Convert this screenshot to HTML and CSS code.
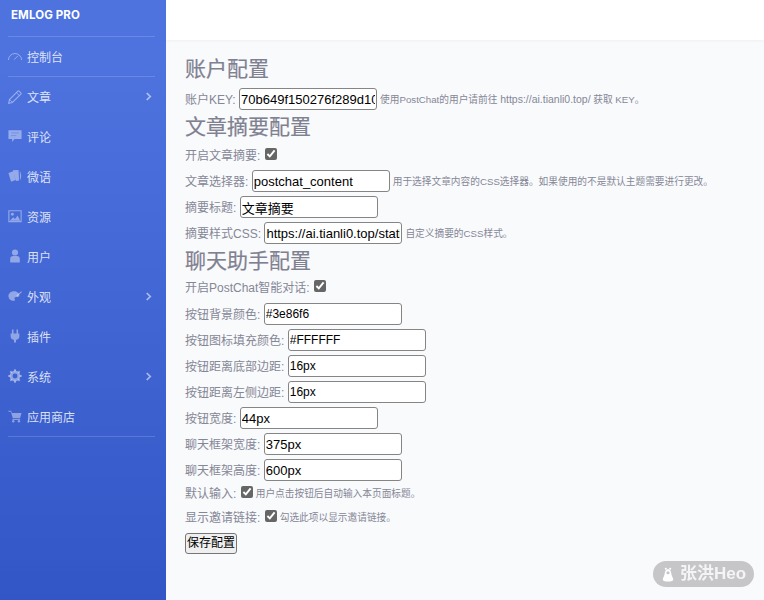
FILE: index.html
```html
<!DOCTYPE html>
<html lang="zh-CN">
<head>
<meta charset="utf-8">
<title>EMLOG PRO</title>
<link rel="stylesheet" href="styles.css">
</head>
<body>
<div class="app">
  <aside class="sidebar">
    <div class="brand">EMLOG PRO</div>
    <hr class="divider">
    <a class="nav-item"><svg class="nav-icon" viewBox="0 0 16 16"><path d="M.5 11.500a7.500 7.500 0 0 1 15 0" fill="none" stroke="currentColor" stroke-width="1.100"/><path d="M7 11l4.500-4.500" stroke="currentColor" stroke-width="1.100"/></svg><span>控制台</span></a>
    <hr class="divider">
    <a class="nav-item"><svg class="nav-icon" viewBox="0 0 16 16"><path d="M.8 15.200l.9-4.200L11.300 1.300a1 1 0 0 1 1.400 0l2 2a1 1 0 0 1 0 1.400L5 14.300z" fill="none" stroke="currentColor" stroke-width="1.300"/><path d="M9.700 3l3.300 3.300M2 11l3 3" stroke="currentColor" stroke-width="1"/></svg><span>文章</span><svg class="chev" viewBox="0 0 8 10"><path d="M2 1l4 4-4 4" fill="none" stroke="currentColor" stroke-width="2"/></svg></a>
    <a class="nav-item"><svg class="nav-icon" viewBox="0 0 16 16"><path d="M.5 1.500h15v10H7.500l-2.800 3.300v-3.300H.5z" fill="currentColor"/><path d="M3.500 4.500h9M3.500 7.500h6" stroke="#6585e2" stroke-width=".8"/></svg><span>评论</span></a>
    <a class="nav-item"><svg class="nav-icon" viewBox="0 0 16 16"><path d="M.5 4.500l5.500-2 2.500 10-5 2z" fill="currentColor"/><path d="M5.500 1.500l6.500-.5.800 12-3.800.8z" fill="currentColor"/><path d="M13.500 2Q16.500 8 13.800 13z" fill="currentColor"/></svg><span>微语</span></a>
    <a class="nav-item"><svg class="nav-icon" viewBox="0 0 16 16"><path d="M1 2h14v12.500H1z" fill="none" stroke="currentColor" stroke-width="1.300"/><circle cx="5" cy="6" r="1.700" fill="currentColor"/><path d="M2 13.500l4-4 2 2 3-4 3 6z" fill="currentColor"/></svg><span>资源</span></a>
    <a class="nav-item"><svg class="nav-icon" viewBox="0 0 16 16"><circle cx="8" cy="4" r="3.500" fill="currentColor"/><path d="M2.500 15.500v-4A3.500 3.500 0 0 1 6 8h4a3.500 3.500 0 0 1 3.500 3.500v4z" fill="currentColor"/></svg><span>用户</span></a>
    <a class="nav-item"><svg class="nav-icon" viewBox="0 0 16 16"><path d="M7 2.500C3 2.500.5 5 .5 8S3 13.500 6.500 13.500c2 0 1.500-1.500 1-2.500s.5-2 2-2h1.500c1.500 0 2-1 2-2 0-2.500-3-4.500-6-4.500z" fill="currentColor"/><path d="M10 8l5.500-5" stroke="currentColor" stroke-width="1.300"/></svg><span>外观</span><svg class="chev" viewBox="0 0 8 10"><path d="M2 1l4 4-4 4" fill="none" stroke="currentColor" stroke-width="2"/></svg></a>
    <a class="nav-item"><svg class="nav-icon" viewBox="0 0 16 16"><path d="M4.500.5h1.800V5H4.500zM9.700.5h1.800V5H9.700zM3 5h10v3.500c0 2-1.500 3.500-3.800 3.800V15.500H6.800v-3.200C4.500 12 3 10.500 3 8.500z" fill="currentColor"/></svg><span>插件</span></a>
    <a class="nav-item"><svg class="nav-icon" viewBox="0 0 16 16"><circle cx="8" cy="8" r="4.500" fill="none" stroke="currentColor" stroke-width="3.400"/><path d="M8 .3v2.500M8 13.200v2.500M.3 8h2.500M13.200 8h2.500M2.600 2.600l1.800 1.800M11.600 11.600l1.800 1.800M2.600 13.400l1.800-1.800M11.600 4.400l1.800-1.800" stroke="currentColor" stroke-width="2.200"/></svg><span>系统</span><svg class="chev" viewBox="0 0 8 10"><path d="M2 1l4 4-4 4" fill="none" stroke="currentColor" stroke-width="2"/></svg></a>
    <a class="nav-item"><svg class="nav-icon" viewBox="0 0 16 16"><path d="M.5 2h3l1 2.500H15.500l-1.800 6H5.500L3.300 3.200H.5z" fill="currentColor"/><path d="M5 12h9" stroke="currentColor" stroke-width="1"/><circle cx="6" cy="14" r="1.400" fill="currentColor"/><circle cx="12.500" cy="14" r="1.400" fill="currentColor"/></svg><span>应用商店</span></a>
    <hr class="divider">
  </aside>
  <div class="main">
    <div class="topbar"></div>
    <form class="content">
      <h2 class="title">账户配置</h2>
      <div class="row"><label>账户KEY:</label><input class="field" type="text" value="70b649f150276f289d10f6a9e7c1"><small>使用PostChat的用户请前往 <span class="en">https://ai.tianli0.top/</span> 获取 KEY。</small></div>
      <h2 class="title">文章摘要配置</h2>
      <div class="row"><label>开启文章摘要:</label><input class="check" type="checkbox" checked></div>
      <div class="row"><label>文章选择器:</label><input class="field" type="text" value="postchat_content"><small>用于选择文章内容的CSS选择器。如果使用的不是默认主题需要进行更改。</small></div>
      <div class="row"><label>摘要标题:</label><input class="field" type="text" value="文章摘要"></div>
      <div class="row"><label>摘要样式CSS:</label><input class="field" type="text" value="https://ai.tianli0.top/static/public/postChatUser_summary.css"><small>自定义摘要的CSS样式。</small></div>
      <h2 class="title">聊天助手配置</h2>
      <div class="row tight"><label>开启PostChat智能对话:</label><input class="check" type="checkbox" checked></div>
      <div class="row gap"><label>按钮背景颜色:</label><input class="field narrow" type="text" value="#3e86f6"></div>
      <div class="row"><label>按钮图标填充颜色:</label><input class="field narrow" type="text" value="#FFFFFF"></div>
      <div class="row"><label>按钮距离底部边距:</label><input class="field narrow" type="text" value="16px"></div>
      <div class="row"><label>按钮距离左侧边距:</label><input class="field narrow" type="text" value="16px"></div>
      <div class="row"><label>按钮宽度:</label><input class="field" type="text" value="44px"></div>
      <div class="row"><label>聊天框架宽度:</label><input class="field" type="text" value="375px"></div>
      <div class="row"><label>聊天框架高度:</label><input class="field" type="text" value="600px"></div>
      <div class="row compact first"><label>默认输入:</label><input class="check" type="checkbox" checked><small>用户点击按钮后自动输入本页面标题。</small></div>
      <div class="row compact"><label>显示邀请链接:</label><input class="check" type="checkbox" checked><small>勾选此项以显示邀请链接。</small></div>
      <button class="save" type="button">保存配置</button>
    </form>
  </div>
</div>
<div class="watermark"><svg class="wm-icon" viewBox="0 0 16 18"><circle cx="5.500" cy="2.500" r="1.200" fill="#fff"/><circle cx="10.500" cy="2.500" r="1.200" fill="#fff"/><path d="M8 3C5 3 4.500 6 4 9c-.5 2.500-2 4-2 6 0 1.500 2 2 6 2s6-.5 6-2c0-2-1.500-3.500-2-6-.5-3-1-6-4-6z" fill="#fff"/><circle cx="8" cy="7" r="1.800" fill="#c6c6c9"/></svg><span>张洪Heo</span></div>
</body>
</html>
```
FILE: styles.css
```css
* { box-sizing: border-box; }
html, body { margin: 0; height: 100%; }
body {
  overflow: hidden;
  background: #f9fafc;
  font-family: "Liberation Sans", "Noto Sans CJK SC", sans-serif;
}
.app { display: flex; height: 600px; }
.sidebar {
  flex: 0 0 166px;
  padding: 0 11px 0 8px;
  background: linear-gradient(180deg, #4e73df 10%, #3356c6 100%);
  color: #fff;
}
.brand {
  height: 36px;
  padding: 8px 0 0 3px;
  font: 700 11.500px/14px Inter, "Liberation Sans", sans-serif;
  letter-spacing: .1px;
}
.divider {
  height: 1px;
  margin: 0;
  border: 0;
  background: rgba(255, 255, 255, .16);
}
.nav-item {
  display: flex;
  align-items: center;
  height: 40px;
  color: rgba(255, 255, 255, .82);
  font-size: 12px;
}
.divider + .nav-item { height: 39px; }
.nav-icon {
  flex: 0 0 14px;
  width: 14px;
  height: 14px;
  margin-right: 5px;
  color: rgba(255, 255, 255, .42);
}
.chev {
  width: 7px;
  height: 9px;
  margin-left: auto;
  margin-right: 3px;
  color: rgba(255, 255, 255, .55);
}
.main { flex: 1; min-width: 0; }
.topbar {
  height: 40px;
  background: #fff;
  box-shadow: 0 1px 3px rgba(58, 59, 69, .05);
}
.content { padding: 14px 0 0 19px; color: #858796; }
.title {
  height: 30px;
  margin: 0;
  font-size: 21px;
  font-weight: 400;
  line-height: 30px;
  color: #7f8190;
  -webkit-text-stroke: .2px #7f8190;
}
.title:first-child { margin-bottom: 2px; }
.row { display: flex; align-items: center; height: 26px; font-size: 12px; }
.row.tight { height: 22px; }
.row.gap { margin-top: 3px; }
.row.compact { height: 24px; }
.row.first { margin-top: -2px; }
.row label { position: relative; top: -1px; margin-right: 3.400px; white-space: nowrap; }
.row small { position: relative; top: -.5px; margin-left: 3px; font-size: 9.700px; white-space: nowrap; }
.row .en { font-size: 10.500px; }
.field {
  width: 138px;
  height: 22px;
  padding: 0 1px;
  border: 1px solid #858585;
  border-radius: 3px;
  background: #fff;
  color: #000;
  font: 13px/20px "Liberation Sans", "Noto Sans CJK SC", sans-serif;
}
.field.narrow { font-size: 12px; }
.check {
  width: 12px;
  height: 12px;
  margin: 0 0 3px 1px;
  accent-color: #666;
}
.save {
  display: block;
  width: 52px;
  height: 21px;
  margin-top: 4px;
  padding: 0;
  border: 1px solid #767676;
  border-radius: 3px;
  background: #efefef;
  color: #000;
  font: 12px/19px "Liberation Sans", "Noto Sans CJK SC", sans-serif;
}
.watermark {
  position: fixed;
  left: 653px;
  top: 561px;
  display: flex;
  align-items: center;
  gap: 5px;
  width: 101px;
  height: 26px;
  padding-left: 8px;
  border-radius: 13px;
  background: #c6c6c9;
  color: #f4f4f6;
  font: 700 17px/26px "Liberation Sans", "Noto Sans CJK SC", sans-serif;
  white-space: nowrap;
}
.wm-icon { flex: 0 0 14px; width: 14px; height: 17px; }
```
